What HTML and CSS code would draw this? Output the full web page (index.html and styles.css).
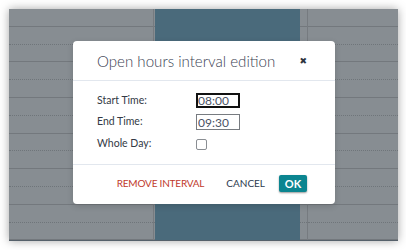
FILE: index.html
```html
<!DOCTYPE html>
<html>
<head>
<meta charset="utf-8">
<link rel="stylesheet" href="styles.css">
</head>
<body>
<div class="frame">
  <div class="calendar">
    <div class="col col-a">
      <div class="slot"></div><div class="slot"></div><div class="slot"></div><div class="slot"></div><div class="slot"></div><div class="slot"></div><div class="slot"></div><div class="slot"></div><div class="slot"></div><div class="slot"></div><div class="slot"></div><div class="slot"></div><div class="slot"></div>
    </div>
    <div class="col col-b">
      <div class="slot"></div><div class="slot"></div><div class="slot"></div><div class="slot"></div><div class="slot"></div><div class="slot"></div><div class="slot"></div><div class="slot"></div><div class="slot"></div><div class="slot"></div><div class="slot"></div><div class="slot"></div><div class="slot"></div>
      <div class="event"></div>
    </div>
    <div class="col col-c">
      <div class="slot"></div><div class="slot"></div><div class="slot"></div><div class="slot"></div><div class="slot"></div><div class="slot"></div><div class="slot"></div><div class="slot"></div><div class="slot"></div><div class="slot"></div><div class="slot"></div><div class="slot"></div><div class="slot"></div>
    </div>
  </div>

  <div class="dialog">
    <div class="dialog-header">
      <span class="dialog-title">Open hours interval edition</span>
      <span class="dialog-close">&#x2716;</span>
    </div>
    <div class="dialog-body">
      <label class="field-label">Start Time:</label>
      <div class="field"><input class="time-input focused" type="text" value="08:00"></div>
      <label class="field-label">End Time:</label>
      <div class="field"><input class="time-input" type="text" value="09:30"></div>
      <label class="field-label">Whole Day:</label>
      <div class="field"><span class="checkbox"></span></div>
    </div>
    <div class="dialog-footer">
      <span class="btn btn-remove">REMOVE INTERVAL</span>
      <span class="btn btn-cancel">CANCEL</span>
      <span class="btn btn-ok">OK</span>
    </div>
  </div>
</div>
</body>
</html>
```

FILE: styles.css
```css
html, body {
  margin: 0;
  padding: 0;
  background: #ffffff;
}

body {
  width: 406px;
  height: 250px;
  overflow: hidden;
  font-family: "Lato", "Open Sans", sans-serif;
}

.frame {
  position: relative;
  margin: 9px 0 0 9px;
  width: 389px;
  height: 232px;
  background: #878d92;
  box-shadow: 0 0 9px rgba(0, 0, 0, 0.35);
}

.calendar {
  display: flex;
  height: 100%;
  border-bottom: 1px solid #55606a;
  box-sizing: border-box;
}

.col {
  display: flex;
  flex-direction: column;
  position: relative;
}

.col-a {
  width: 144px;
  border-right: 1px solid #767b80;
}

.col-b {
  width: 153px;
  border-right: 1px solid #767b80;
}

.col-c {
  flex: 1;
}

.slot {
  height: 17.8px;
  box-sizing: border-box;
  flex: none;
}

.slot:nth-child(odd) {
  border-bottom: 1px solid #73787d;
}

.slot:nth-child(even) {
  border-bottom: 1px dotted #6f757a;
}

.event {
  position: absolute;
  top: 0;
  bottom: 0;
  left: 1px;
  right: 7px;
  background: #4a6a7b;
}

.dialog {
  position: absolute;
  left: 64px;
  top: 32px;
  width: 262px;
  height: 163px;
  background: #ffffff;
  border-radius: 4px;
  display: flex;
  flex-direction: column;
  box-shadow: 0 2px 6px rgba(0, 0, 0, 0.15);
}

.dialog-header {
  height: 39px;
  border-bottom: 1px solid #e2e7ee;
  display: flex;
  align-items: center;
  justify-content: space-between;
  padding: 0 28px 0 24px;
}

.dialog-title {
  font-size: 15.1px;
  color: #3a4253;
  font-weight: 300;
}

.dialog-close {
  font-size: 9px;
  color: #2e3440;
  font-weight: bold;
  font-family: "DejaVu Sans", sans-serif;
}

.dialog-body {
  flex: 1;
  display: grid;
  grid-template-columns: 99px auto;
  grid-auto-rows: min-content;
  row-gap: 6px;
  padding: 12px 24px 0 24px;
  border-bottom: 1px solid #e2e7ee;
  align-content: start;
}

.field-label {
  font-size: 10.5px;
  color: #333a45;
  line-height: 14px;
}

.field {
  display: flex;
  align-items: center;
}

.time-input {
  box-sizing: border-box;
  width: 44px;
  height: 16px;
  padding: 0 0 0 1px;
  margin: 0;
  font-family: "Lato", sans-serif;
  font-size: 12px;
  color: #4a5366;
  border: 1px solid #777b80;
  border-radius: 0;
  background: #fff;
}

.time-input.focused {
  border: 2px solid #111;
  padding-left: 0;
  height: 15px;
}

.checkbox {
  display: block;
  width: 9px;
  height: 9px;
  border: 1px solid #8a8e93;
  border-radius: 2px;
  margin-top: 2px;
}

.dialog-footer {
  height: 36px;
  display: flex;
  align-items: center;
  justify-content: flex-end;
  padding: 0 28px 3px 0;
}

.btn {
  font-size: 10px;
}

.btn-remove {
  color: #c0392b;
  letter-spacing: -0.2px;
  margin-right: 22px;
}

.btn-cancel {
  color: #2c3a4e;
  margin-right: 14px;
}

.btn-ok {
  background: #0b8590;
  color: #ffffff;
  font-weight: bold;
  font-size: 11px;
  width: 28px;
  height: 17px;
  display: flex;
  align-items: center;
  justify-content: center;
  border-radius: 2px;
  box-shadow: 0 1px 2px rgba(0, 0, 0, 0.4);
}
```
